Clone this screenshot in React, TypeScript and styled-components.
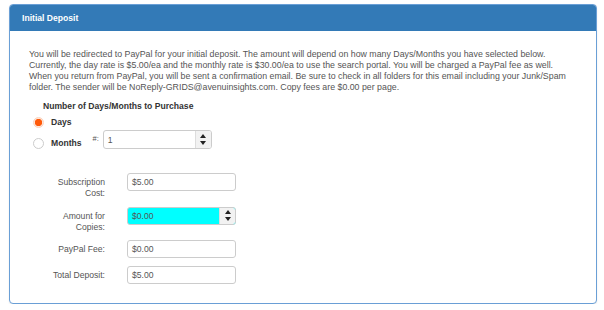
import { Fragment } from 'react'
import styled, { createGlobalStyle } from 'styled-components'

const GlobalStyle = createGlobalStyle`
  html, body {
    margin: 0;
    padding: 0;
    background: #fff;
  }
  body {
    font-family: "Liberation Sans", Arial, sans-serif;
  }
`

const Page = styled.div`
  padding: 4px 0 0 9px;
`

const Panel = styled.section`
  box-sizing: border-box;
  width: 588px;
  height: 300px;
  border: 1px solid #6a9fd6;
  border-radius: 4px;
  background: #fff;
  box-shadow: 0 1px 2px rgba(0, 0, 0, 0.08);
  overflow: hidden;
`

const Header = styled.header`
  display: flex;
  align-items: center;
  height: 26px;
  padding: 0 12px;
  background: #337ab7;
  color: #fff;
  font-size: 8.6px;
  font-weight: bold;
`

const Body = styled.div`
  padding: 18px 19px 0 19px;
`

const Intro = styled.p`
  margin: 0;
  font-size: 8.8px;
  line-height: 11px;
  color: #555;
  white-space: nowrap;
`

const SectionTitle = styled.div`
  margin: 8px 0 0 14px;
  font-size: 8.6px;
  line-height: 11px;
  font-weight: bold;
  color: #333;
`

const RadioRow = styled.div<{ $end?: boolean }>`
  display: flex;
  align-items: ${(p) => (p.$end ? 'flex-end' : 'center')};
  margin-top: ${(p) => (p.$end ? '2px' : '5px')};
  padding-left: 4px;
`

const RadioOption = styled.label`
  display: flex;
  align-items: center;
  gap: 7px;
  font-size: 8.6px;
  line-height: 11px;
  font-weight: bold;
  color: #333;
`

const RadioDot = styled.span<{ $checked?: boolean }>`
  box-sizing: border-box;
  width: 11px;
  height: 11px;
  border-radius: 50%;
  border: 1px solid ${(p) => (p.$checked ? '#fbd3bf' : '#ccc')};
  background: ${(p) =>
    p.$checked ? 'radial-gradient(circle, #ff5a0a 0 3.4px, #fde6da 3.9px)' : '#fff'};
`

const Hash = styled.span`
  align-self: flex-start;
  margin: 3px 4px 0 11px;
  font-size: 7.5px;
  line-height: 11px;
  color: #555;
`

const InputBox = styled.div<{ $highlight?: boolean; $height?: number }>`
  box-sizing: border-box;
  display: flex;
  align-items: stretch;
  width: 109px;
  height: ${(p) => p.$height ?? 18}px;
  border: 1px solid #ccc;
  border-radius: 3px;
  background: ${(p) => (p.$highlight ? '#00ffff' : '#fff')};
  overflow: hidden;
`

const InputText = styled.span`
  flex: 1;
  display: flex;
  align-items: center;
  padding-left: 4px;
  font-size: 8.6px;
  color: #555;
`

const Spinner = styled.span`
  display: flex;
  flex-direction: column;
  align-items: center;
  justify-content: center;
  gap: 3px;
  width: 15px;
  background: #f2f2f2;
  border-left: 1px solid #ddd;
`

const Arrow = styled.span<{ $down?: boolean }>`
  width: 0;
  height: 0;
  border-left: 3px solid transparent;
  border-right: 3px solid transparent;
  ${(p) => (p.$down ? 'border-top: 4px solid #222;' : 'border-bottom: 4px solid #222;')}
`

const FormGrid = styled.div`
  display: grid;
  grid-template-columns: 56px 109px;
  column-gap: 22px;
  row-gap: 7.7px;
  margin-top: 24px;
  padding-left: 20px;
`

const FieldLabel = styled.span`
  padding-top: 4px;
  text-align: right;
  font-size: 8.6px;
  line-height: 11px;
  color: #555;
`

const Field = ({
  value,
  highlight,
  spinner,
  height,
}: {
  value: string
  highlight?: boolean
  spinner?: boolean
  height?: number
}) => (
  <InputBox $highlight={highlight} $height={height}>
    <InputText>{value}</InputText>
    {spinner && (
      <Spinner>
        <Arrow />
        <Arrow $down />
      </Spinner>
    )}
  </InputBox>
)

const introLines = [
  'You will be redirected to PayPal for your initial deposit. The amount will depend on how many Days/Months you have selected below.',
  'Currently, the day rate is $5.00/ea and the monthly rate is $30.00/ea to use the search portal. You will be charged a PayPal fee as well.',
  'When you return from PayPal, you will be sent a confirmation email. Be sure to check in all folders for this email including your Junk/Spam',
  'folder. The sender will be NoReply-GRIDS@avenuinsights.com. Copy fees are $0.00 per page.',
]

const fields = [
  { label: 'Subscription Cost:', value: '$5.00' },
  { label: 'Amount for Copies:', value: '$0.00', highlight: true, spinner: true },
  { label: 'PayPal Fee:', value: '$0.00' },
  { label: 'Total Deposit:', value: '$5.00' },
]

export default function App() {
  return (
    <>
      <GlobalStyle />
      <Page>
        <Panel>
          <Header>Initial Deposit</Header>
          <Body>
            <Intro>
              {introLines.map((line, i) => (
                <Fragment key={i}>
                  {line}
                  {i < introLines.length - 1 && <br />}
                </Fragment>
              ))}
            </Intro>
            <SectionTitle>Number of Days/Months to Purchase</SectionTitle>
            <RadioRow>
              <RadioOption>
                <RadioDot $checked />
                Days
              </RadioOption>
            </RadioRow>
            <RadioRow $end>
              <RadioOption>
                <RadioDot />
                Months
              </RadioOption>
              <Hash>#:</Hash>
              <Field value="1" spinner height={19} />
            </RadioRow>
            <FormGrid>
              {fields.map((f) => (
                <Fragment key={f.label}>
                  <FieldLabel>{f.label}</FieldLabel>
                  <Field value={f.value} highlight={f.highlight} spinner={f.spinner} />
                </Fragment>
              ))}
            </FormGrid>
          </Body>
        </Panel>
      </Page>
    </>
  )
}
